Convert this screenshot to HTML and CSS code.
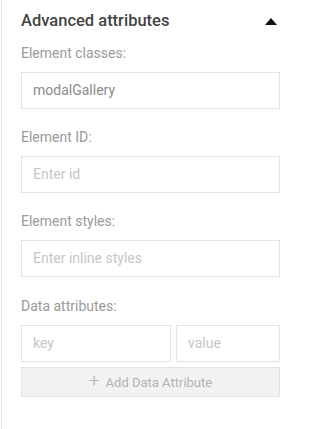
FILE: index.html
```html
<!DOCTYPE html>
<html>
<head>
<meta charset="utf-8">
<link rel="stylesheet" href="styles.css">
</head>
<body>
<div class="panel">
  <div class="header">
    <span class="title">Advanced attributes</span>
    <span class="caret"></span>
  </div>
  <div class="group first">
    <label class="label">Element classes:</label>
    <div class="input value-text">modalGallery</div>
  </div>
  <div class="group">
    <label class="label">Element ID:</label>
    <div class="input placeholder">Enter id</div>
  </div>
  <div class="group">
    <label class="label">Element styles:</label>
    <div class="input placeholder">Enter inline styles</div>
  </div>
  <div class="group data">
    <label class="label">Data attributes:</label>
    <div class="pair">
      <div class="input placeholder key">key</div>
      <div class="input placeholder val">value</div>
    </div>
    <div class="add-btn"><span class="plus">+</span>Add Data Attribute</div>
  </div>
</div>
</body>
</html>
```
FILE: styles.css
```css
html, body {
  margin: 0;
  padding: 0;
  background: #ffffff;
}
body {
  font-family: Roboto, "Liberation Sans", sans-serif;
  width: 295px;
  height: 429px;
  overflow: hidden;
}
.panel {
  margin-left: 1px;
  border-left: 1px solid #e6e6e6;
  height: 429px;
  box-sizing: border-box;
  padding: 9px 15px 0 19px;
}
.header {
  display: flex;
  align-items: center;
  justify-content: space-between;
  height: 24px;
}
.title {
  font-size: 16.5px;
  font-weight: 500;
  color: #444444;
  line-height: 24px;
}
.caret {
  width: 0;
  height: 0;
  border-left: 6px solid transparent;
  border-right: 6px solid transparent;
  border-bottom: 7px solid #111;
  margin-right: 3px;
  margin-top: 0;
}
.group {
  margin-top: 18px;
}
.group.first {
  margin-top: 10px;
}
.group.data {
  margin-top: 19px;
}
.label {
  display: block;
  font-size: 14px;
  line-height: 20px;
  color: #9a9a9a;
  margin-bottom: 9px;
}
.input {
  box-sizing: border-box;
  height: 37px;
  border: 1px solid #e3e3e3;
  padding: 0 11px;
  font-size: 14px;
  line-height: 35px;
  white-space: nowrap;
  overflow: hidden;
}
.value-text {
  color: #8c8c8c;
}
.placeholder {
  color: #c6c6c6;
}
.pair {
  display: flex;
  gap: 5px;
}
.key {
  width: 150px;
}
.val {
  flex: 1;
}
.add-btn {
  margin-top: 5px;
  box-sizing: border-box;
  height: 30px;
  border: 1px solid #e3e3e3;
  background: #f2f2f2;
  color: #b3b3b3;
  font-size: 13px;
  display: flex;
  align-items: center;
  justify-content: center;
}
.plus {
  font-size: 19px;
  font-weight: 300;
  margin-right: 6px;
  line-height: 18px;
  margin-top: -2px;
}
```
